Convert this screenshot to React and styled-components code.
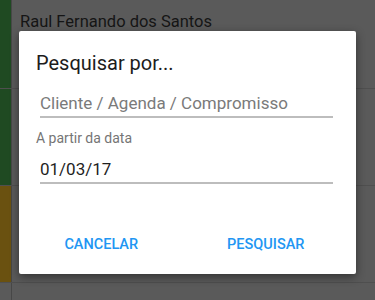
import React from 'react'
import styled, { createGlobalStyle } from 'styled-components'

const GlobalStyle = createGlobalStyle`
  html, body {
    margin: 0;
    padding: 0;
    background: #5a5a5a;
  }
  body {
    font-family: Roboto, "Noto Sans", "Liberation Sans", sans-serif;
    -webkit-font-smoothing: antialiased;
  }
`

const rows = [
  { name: 'Raul Fernando dos Santos', color: '#1f4a22', height: 89 },
  { name: '', color: '#1f4a22', height: 97 },
  { name: '', color: '#6a5110', height: 97 },
  { name: '', color: 'transparent', height: 40 },
]

const App = () => {
  return (
    <>
      <GlobalStyle />
      <Screen>
        <List>
          {rows.map((row, i) => (
            <Row key={i} $height={row.height}>
              <Strip $color={row.color} />
              <RowBody>
                <RowTitle>{row.name}</RowTitle>
              </RowBody>
            </Row>
          ))}
        </List>
        <Dialog>
          <DialogTitle>Pesquisar por...</DialogTitle>
          <Field $placeholder>Cliente / Agenda / Compromisso</Field>
          <FieldLabel>A partir da data</FieldLabel>
          <Field $gap={13}>01/03/17</Field>
          <Actions>
            <ActionButton>CANCELAR</ActionButton>
            <ActionButton>PESQUISAR</ActionButton>
          </Actions>
        </Dialog>
      </Screen>
    </>
  )
}

export default App

const Screen = styled.div`
  position: relative;
  width: 375px;
  height: 300px;
  overflow: hidden;
  background: #5a5a5a;
`

const List = styled.div`
  display: flex;
  flex-direction: column;
`

const Row = styled.div`
  display: flex;
  height: ${p => p.$height}px;
  border-bottom: 1px solid #4f4f4f;
  box-sizing: border-box;
`

const Strip = styled.div`
  width: 11px;
  background: ${p => p.$color};
  border-right: 1px solid #474747;
`

const RowBody = styled.div`
  flex: 1;
  padding: 12px 8px 0 8px;
`

const RowTitle = styled.div`
  font-size: 16.5px;
  line-height: 20px;
  color: #151515;
`

const Dialog = styled.div`
  position: absolute;
  top: 31px;
  left: 19px;
  width: 337px;
  height: 243px;
  box-sizing: border-box;
  background: #ffffff;
  border-radius: 2px;
  box-shadow: 0 3px 10px rgba(0, 0, 0, 0.45);
  padding: 20px 19px 0 17px;
  display: flex;
  flex-direction: column;
`

const DialogTitle = styled.div`
  font-size: 20px;
  line-height: 24px;
  color: #1c1c1c;
`

const Field = styled.div`
  margin: ${p => p.$gap || 18}px 4px 0 4px;
  padding-bottom: 3px;
  font-size: 17px;
  line-height: 20px;
  color: ${p => (p.$placeholder ? '#7a7a7a' : '#1f1f1f')};
  border-bottom: 2px solid #bdbdbd;
`

const FieldLabel = styled.div`
  margin-top: 12px;
  font-size: 14px;
  line-height: 16px;
  color: #757575;
`

const Actions = styled.div`
  display: grid;
  grid-template-columns: 1fr 1fr;
  margin: 53px -19px 0 -17px;
  padding-right: 8px;
`

const ActionButton = styled.button`
  border: none;
  background: none;
  padding: 0;
  font-family: inherit;
  font-size: 14.5px;
  line-height: 16px;
  font-weight: 500;
  color: #2196f3;
  text-align: center;
`
